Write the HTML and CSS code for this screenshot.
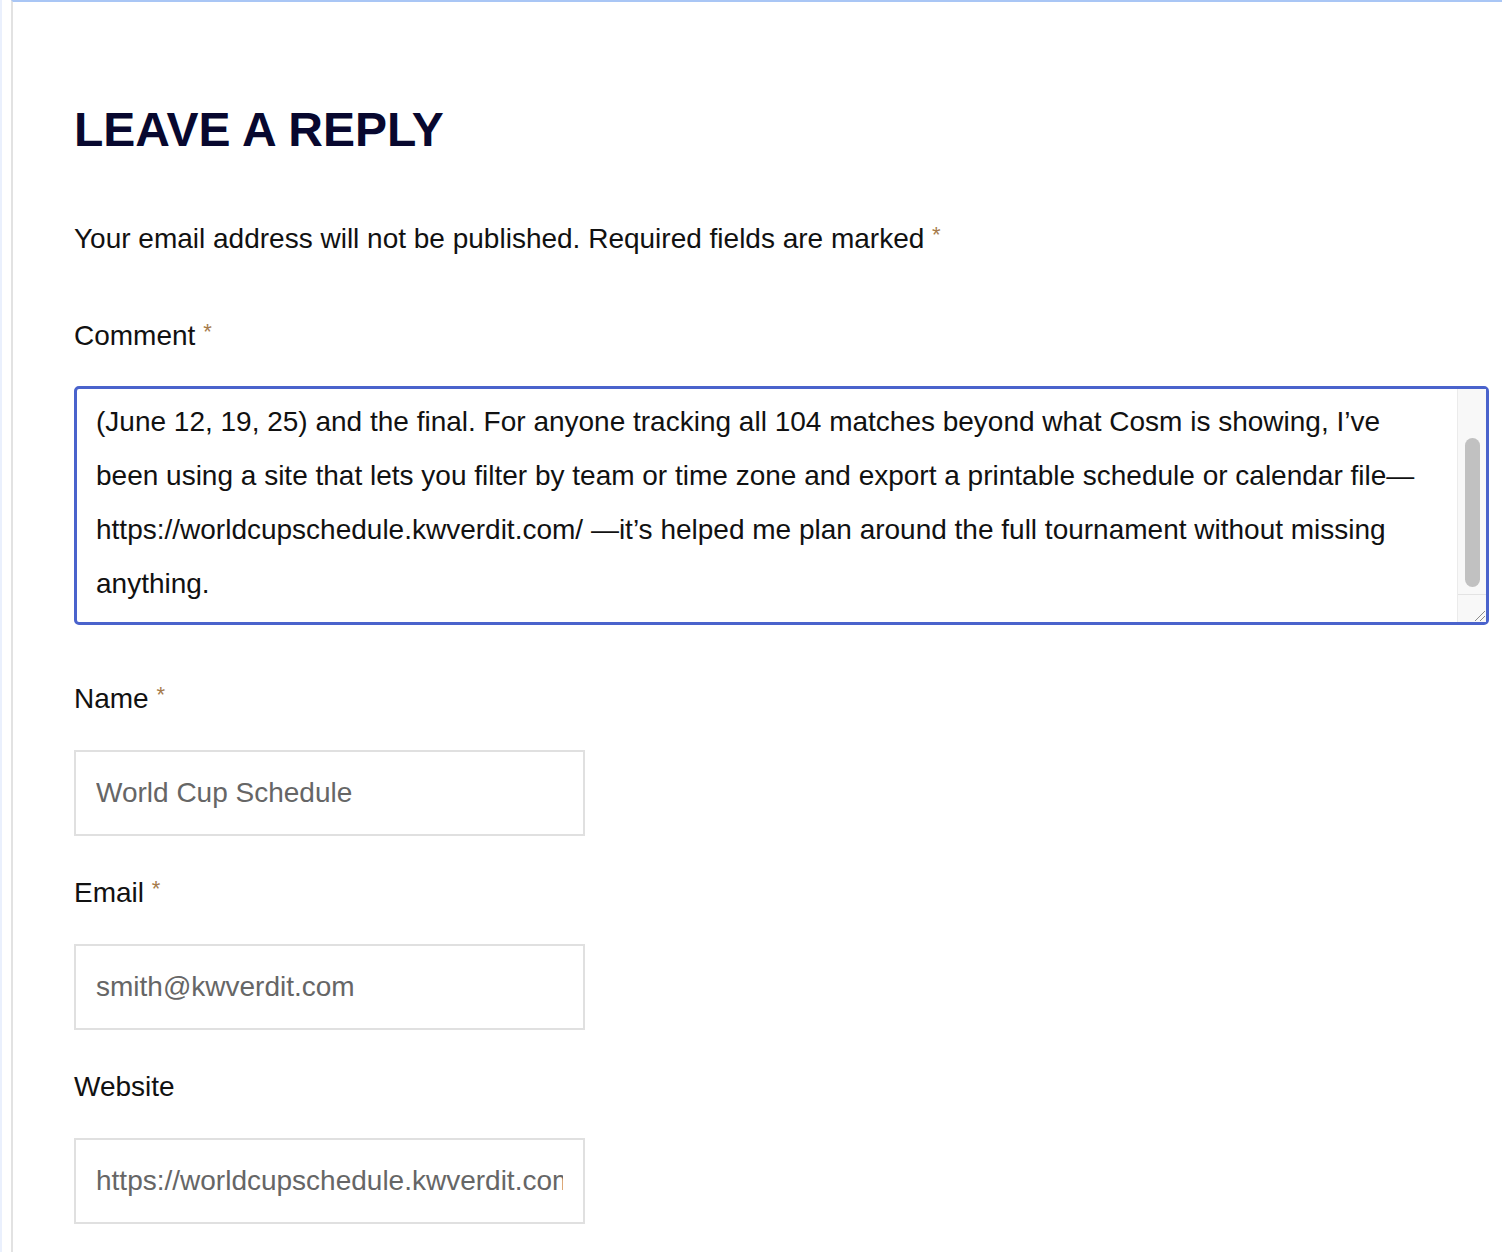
FILE: index.html
```html
<!DOCTYPE html>
<html lang="en">
  <head>
    <meta charset="UTF-8" />
    <meta name="viewport" content="width=device-width, initial-scale=1.0" />
    <title>Leave a Reply</title>
    <link rel="stylesheet" href="styles.css">
  </head>
  <body>
    <div class="page">
      <div class="respond">
        <h3 class="reply-title">LEAVE A REPLY</h3>
        <p class="notes">Your email address will not be published. Required fields are marked <span class="required">*</span></p>

        <div class="field field-first">
          <label class="field-label">Comment <span class="required">*</span></label>
          <div class="comment-box">
            <div class="comment-text">
              <span class="line">(June 12, 19, 25) and the final. For anyone tracking all 104 matches beyond what Cosm is showing, I’ve</span>
              <span class="line">been using a site that lets you filter by team or time zone and export a printable schedule or calendar file—</span>
              <span class="line">https://worldcupschedule.kwverdit.com/ —it’s helped me plan around the full tournament without missing</span>
              <span class="line">anything.</span>
            </div>
            <div class="scrollbar">
              <div class="track"><div class="thumb"></div></div>
              <div class="grip">
                <svg width="16" height="16" viewBox="0 0 16 16">
                  <path d="M15 5 L5 15 M15 10 L10 15" stroke="#8a8a8a" stroke-width="1" fill="none" />
                </svg>
              </div>
            </div>
          </div>
        </div>

        <div class="field">
          <label class="field-label">Name <span class="required">*</span></label>
          <div class="text-input"><span class="value">World Cup Schedule</span></div>
        </div>

        <div class="field">
          <label class="field-label">Email <span class="required">*</span></label>
          <div class="text-input"><span class="value">smith@kwverdit.com</span></div>
        </div>

        <div class="field">
          <label class="field-label">Website</label>
          <div class="text-input"><span class="value">https://worldcupschedule.kwverdit.com/</span></div>
        </div>
      </div>
    </div>
  </body>
</html>
```

FILE: styles.css
```css
body {
  margin: 0;
  background-color: #fff;
  font-family: "Liberation Sans", Arial, Helvetica, sans-serif;
  color: #111;
  border-left: 2px solid #eaf0fd;
}
.page {
  margin-left: 9px;
  border-left: 2px solid #e2e2e2;
  border-top: 2px solid #a9c6f5;
  min-height: 1250px;
}
.respond {
  padding: 100px 13px 0 61px;
}
.reply-title {
  margin: 0;
  font-size: 48px;
  font-weight: 700;
  line-height: 56px;
  color: #08082f;
}
.notes {
  margin: 61px 0 0;
  font-size: 28px;
  line-height: 40px;
}
.required {
  color: #a67b4b;
  font-size: 22px;
  line-height: 0;
  vertical-align: 6px;
}
.field {
  margin-top: 37px;
}
.field-first {
  margin-top: 57px;
}
.field-label {
  display: block;
  font-size: 28px;
  line-height: 40px;
  margin-bottom: 31px;
}
.field-first .field-label {
  margin-bottom: 30px;
}
.comment-box {
  display: flex;
  height: 233px;
  border: 3px solid #4a63cc;
  border-radius: 5px;
  margin-bottom: 54px;
}
.comment-text {
  flex: 1;
  padding: 6px 20px 0 19px;
  font-size: 28px;
  line-height: 54px;
  overflow: hidden;
}
.line {
  display: block;
  white-space: nowrap;
}
.scrollbar {
  width: 28px;
  display: flex;
  flex-direction: column;
  background-color: #f8f8f8;
  border-left: 1px solid #ebebeb;
}
.track {
  flex: 1;
  padding: 49px 6px 7px 7px;
}
.thumb {
  height: 149px;
  background-color: #c1c1c1;
  border-radius: 8px;
}
.grip {
  height: 28px;
  border-top: 1px solid #e3e3e3;
  display: flex;
  justify-content: flex-end;
  align-items: flex-end;
}
.grip svg {
  display: block;
}
.text-input {
  width: 467px;
  height: 82px;
  border: 2px solid #e0e0e0;
  padding: 0 20px 0 20px;
  display: flex;
  align-items: center;
  font-size: 28px;
  color: #666;
}
.value {
  display: block;
  width: 100%;
  white-space: nowrap;
  overflow: hidden;
}
```
